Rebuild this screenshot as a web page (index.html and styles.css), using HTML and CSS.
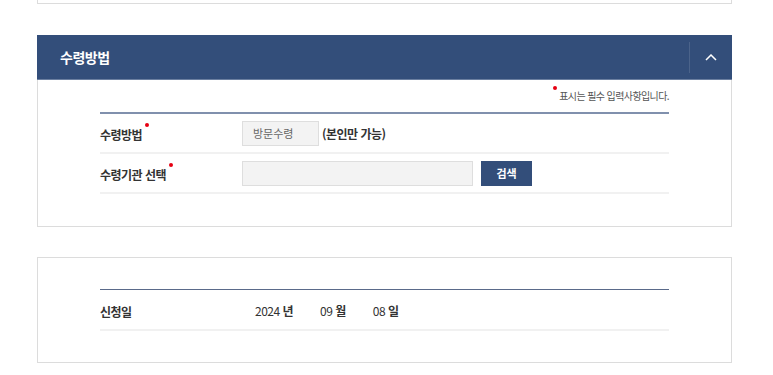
FILE: index.html
```html
<!DOCTYPE html>
<html lang="ko">
<head>
    <meta charset="UTF-8">
    <meta name="viewport" content="width=device-width, initial-scale=1.0">
    <title>수령방법</title>
    <link rel="stylesheet" href="styles.css">
</head>
<body>
    <div class="wrap">
        <div class="box box-prev"></div>

        <div class="panel">
            <div class="panel-head">
                <h2>수령방법</h2>
                <button class="toggle" type="button" aria-label="접기">
                    <svg width="12" height="7" viewBox="0 0 12 7"><path d="M1 6 L6 1 L11 6" fill="none" stroke="#fff" stroke-width="1.5"/></svg>
                </button>
            </div>
            <div class="box panel-body">
                <div class="inner">
                    <p class="note"><span class="req"></span> 표시는 필수 입력사항입니다.</p>
                    <div class="form-table">
                        <div class="row">
                            <div class="label">수령방법<span class="req"></span></div>
                            <div class="value">
                                <input type="text" class="input input-short" value="방문수령" readonly>
                                <strong class="hint">(본인만 가능)</strong>
                            </div>
                        </div>
                        <div class="row">
                            <div class="label">수령기관 선택<span class="req"></span></div>
                            <div class="value">
                                <input type="text" class="input input-long">
                                <button class="btn-search" type="button">검색</button>
                            </div>
                        </div>
                    </div>
                </div>
            </div>
        </div>

        <div class="box date-box">
            <div class="inner">
                <div class="form-table dark">
                    <div class="row">
                        <div class="label">신청일</div>
                        <div class="value date">
                            <span>2024 <b>년</b></span>
                            <span>09 <b>월</b></span>
                            <span>08 <b>일</b></span>
                        </div>
                    </div>
                </div>
            </div>
        </div>
    </div>
</body>
</html>
```

FILE: styles.css
```css
* {
    box-sizing: border-box;
}

body {
    margin: 0;
    font-family: "Noto Sans CJK KR", "Noto Sans", sans-serif;
    color: #333;
    background: #fff;
}

.wrap {
    width: 695px;
    margin-left: 37px;
}

.box {
    border: 1px solid #dcdcdc;
    background: #fff;
}

.box-prev {
    height: 4px;
    border-top: none;
    margin-bottom: 31px;
}

.panel-head {
    height: 45px;
    background: #334e7a;
    display: flex;
    align-items: center;
    justify-content: space-between;
    border-bottom: 1px solid #6b7fa0;
}

.panel-head h2 {
    margin: 0 0 0 23px;
    font-size: 14px;
    font-weight: 700;
    color: #fff;
    letter-spacing: -0.5px;
}

.toggle {
    width: 43px;
    height: 31px;
    border: none;
    border-left: 1px solid rgba(255,255,255,0.12);
    background: none;
    padding: 0;
    display: flex;
    align-items: center;
    justify-content: center;
    cursor: pointer;
}

.panel-body {
    border-top: none;
    height: 147px;
    margin-bottom: 30px;
}

.inner {
    margin: 0 62px 0 62px;
}

.note {
    margin: 0;
    padding-top: 8px;
    height: 32px;
    text-align: right;
    font-size: 10px;
    color: #555;
    letter-spacing: -0.6px;
}

.req {
    display: inline-block;
    position: relative;
    width: 4px;
    height: 4px;
    border-radius: 50%;
    background: #e60012;
    vertical-align: top;
    margin-left: 3px;
}

.note .req {
    top: -2px;
}

.label .req {
    top: -6px;
}

.form-table {
    border-top: 2px solid #8090ad;
}

.form-table.dark {
    border-top-width: 1px;
    border-top-color: #5a6a8a;
}

.row {
    display: flex;
    align-items: center;
    height: 40px;
    border-bottom: 2px solid #f1f1f1;
}

.dark .row {
    height: 41px;
}

.label {
    width: 142px;
    font-size: 12px;
    font-weight: 700;
    color: #333;
    letter-spacing: -0.5px;
    line-height: 1;
    padding-top: 4px;
}

.value {
    display: flex;
    align-items: center;
    font-size: 12px;
}

.input {
    height: 25px;
    border: 1px solid #dedede;
    background: #f3f3f3;
    font-family: inherit;
    font-size: 11px;
    color: #666;
    padding: 0 10px;
}

.input-short {
    width: 77px;
}

.input-long {
    width: 231px;
}

.hint {
    margin-left: 3px;
    font-size: 12px;
    color: #333;
    letter-spacing: -0.5px;
}

.btn-search {
    margin-left: 8px;
    width: 51px;
    height: 25px;
    border: none;
    background: #334e7a;
    color: #fff;
    font-family: inherit;
    font-size: 11px;
    font-weight: 700;
    cursor: pointer;
}

.date-box {
    height: 106px;
    padding-top: 31px;
}

.date {
    padding-left: 13px;
    padding-top: 2px;
    color: #333;
}

.date span {
    margin-right: 27px;
    letter-spacing: -0.5px;
}

.date b {
    font-weight: 700;
}
```
